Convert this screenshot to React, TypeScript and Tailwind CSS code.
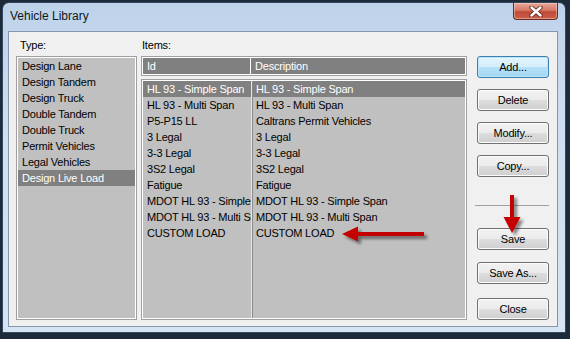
import React from "react";

const typeItems = [
  "Design Lane",
  "Design Tandem",
  "Design Truck",
  "Double Tandem",
  "Double Truck",
  "Permit Vehicles",
  "Legal Vehicles",
  "Design Live Load",
];

const items: [string, string][] = [
  ["HL 93 - Simple Span", "HL 93 - Simple Span"],
  ["HL 93 - Multi Span", "HL 93 - Multi Span"],
  ["P5-P15 LL", "Caltrans Permit Vehicles"],
  ["3 Legal", "3 Legal"],
  ["3-3 Legal", "3-3 Legal"],
  ["3S2 Legal", "3S2 Legal"],
  ["Fatigue", "Fatigue"],
  ["MDOT HL 93 - Simple Span", "MDOT HL 93 - Simple Span"],
  ["MDOT HL 93 - Multi Span", "MDOT HL 93 - Multi Span"],
  ["CUSTOM LOAD", "CUSTOM LOAD"],
];

function Btn({ label, focused }: { label: string; focused?: boolean }) {
  return (
    <div
      className={
        focused
          ? "h-[22px] w-[72px] rounded-[3px] border border-[#3c7fb1] bg-[linear-gradient(to_bottom,#e5f5fd_0%,#d3eefb_50%,#b6e2f9_50%,#a2d6f3_100%)] shadow-[inset_0_0_0_1px_#b9e6fb] flex items-center justify-center text-[11px] text-black"
          : "h-[22px] w-[72px] rounded-[3px] border border-[#707070] bg-[linear-gradient(to_bottom,#f2f2f2_0%,#ebebeb_50%,#dddddd_50%,#cfcfcf_100%)] shadow-[inset_0_0_0_1px_#fcfcfc] flex items-center justify-center text-[11px] text-black"
      }
    >
      {label}
    </div>
  );
}

export default function App() {
  return (
    <div className="relative w-[570px] h-[339px] bg-[#1d2a3a] pt-[2px] pl-[2px] pr-[4px] pb-[6px] font-['Liberation_Sans',Arial,sans-serif] tracking-[-0.2px]">
      <div className="h-full w-full rounded-t-[7px] border border-[#34475e] bg-[linear-gradient(to_bottom,#bed2ea_0%,#cfdff1_40%,#d6e4f3_100%)] flex flex-col pl-[5px] pr-[7px] pb-[5px]">
        {/* Title bar */}
        <div className="h-[28px] flex items-start justify-between">
          <div className="pl-[2px] pt-[5px] text-[12px] leading-[16px] text-[#101820] tracking-normal">
            Vehicle Library
          </div>
          <div className="h-[17px] w-[45px] rounded-b-[4px] border border-t-0 border-[#6b2a22] bg-[linear-gradient(to_bottom,#e9a99a_0%,#d47a68_45%,#c04a35_55%,#c9604a_100%)] flex items-center justify-center shadow-[inset_0_0_0_1px_rgba(255,220,210,0.45)]">
            <svg width="14" height="11" viewBox="0 0 14 11">
              <path d="M2.5 1.5 L11.5 9.5 M11.5 1.5 L2.5 9.5" stroke="#5a2a24" strokeWidth="4.2" strokeLinecap="round" />
              <path d="M2.5 1.5 L11.5 9.5 M11.5 1.5 L2.5 9.5" stroke="#ffffff" strokeWidth="2.4" strokeLinecap="round" />
            </svg>
          </div>
        </div>

        {/* Client area */}
        <div className="flex-1 border border-[#8596ab] bg-[#f0f0f0] flex pt-[5px] pl-[7px] pr-[8px] pb-[6px] text-[11px] text-black">
          {/* Type column */}
          <div className="w-[121px] flex flex-col">
            <div className="h-[16px] leading-[16px] pl-[4px]">Type:</div>
            <div className="mt-[3px] flex-1 border border-[#a0a0a0]">
              <div className="h-full border border-white bg-[#c0c0c0]">
                {typeItems.map((t) => (
                  <div
                    key={t}
                    className={
                      t === "Design Live Load"
                        ? "h-[16px] leading-[16px] pl-[4px] bg-[#808080] text-white whitespace-nowrap"
                        : "h-[16px] leading-[16px] pl-[4px] whitespace-nowrap"
                    }
                  >
                    {t}
                  </div>
                ))}
              </div>
            </div>
          </div>

          {/* Items column */}
          <div className="ml-[4px] w-[326px] flex flex-col">
            <div className="h-[16px] leading-[16px] pl-[1px]">Items:</div>
            <div className="mt-[3px] h-[20px] border border-[#a0a0a0]">
              <div className="h-full border border-white bg-[#808080] flex text-white">
                <div className="w-[108px] h-full leading-[16px] pl-[4px] border-r border-white">Id</div>
                <div className="flex-1 h-full leading-[16px] pl-[4px]">Description</div>
              </div>
            </div>
            <div className="mt-[3px] flex-1 border border-[#a0a0a0]">
              <div className="h-full border border-white bg-[#c0c0c0] flex">
                <div className="w-[108px] shrink-0">
                  {items.map(([id], i) => (
                    <div
                      key={i}
                      className={
                        i === 0
                          ? "h-[16px] leading-[16px] pl-[4px] bg-[#808080] text-white whitespace-nowrap overflow-hidden"
                          : "h-[16px] leading-[16px] pl-[4px] whitespace-nowrap overflow-hidden"
                      }
                    >
                      {id}
                    </div>
                  ))}
                </div>
                <div className="w-[1px] bg-[#e6e6e6]" />
                <div className="w-[1px] bg-[#8a8a8a]" />
                <div className="flex-1 min-w-0">
                  {items.map(([, d], i) => (
                    <div
                      key={i}
                      className={
                        i === 0
                          ? "h-[16px] leading-[16px] pl-[3px] bg-[#808080] text-white whitespace-nowrap overflow-hidden"
                          : "h-[16px] leading-[16px] pl-[3px] whitespace-nowrap overflow-hidden"
                      }
                    >
                      {d}
                    </div>
                  ))}
                </div>
              </div>
            </div>
          </div>

          {/* Buttons column */}
          <div className="ml-[10px] w-[72px] flex flex-col pt-[19px]">
            <div className="flex flex-col gap-[11px]">
              <Btn label="Add..." focused />
              <Btn label="Delete" />
              <Btn label="Modify..." />
              <Btn label="Copy..." />
            </div>
            <div className="mt-[28px] -ml-[2px] w-[74px] h-[1px] bg-[#a0a0a0]" />
            <div className="mt-[22px] flex flex-col gap-[12px]">
              <Btn label="Save" />
              <Btn label="Save As..." />
            </div>
            <div className="mt-auto">
              <Btn label="Close" />
            </div>
          </div>
        </div>
      </div>

      {/* Annotation arrows */}
      <svg className="absolute left-0 top-0 pointer-events-none" width="570" height="339" viewBox="0 0 570 339">
        <defs>
          <filter id="sh" x="-30%" y="-30%" width="160%" height="160%">
            <feDropShadow dx="3" dy="3" stdDeviation="1.8" floodColor="#000000" floodOpacity="0.45" />
          </filter>
        </defs>
        <g filter="url(#sh)" fill="#c40000">
          <polygon points="342,234 358,226.5 358,241.5" />
          <rect x="357" y="232" width="67" height="4" />
          <rect x="510" y="195" width="4" height="23" />
          <polygon points="503.5,217 520.5,217 512,233" />
        </g>
      </svg>
    </div>
  );
}
